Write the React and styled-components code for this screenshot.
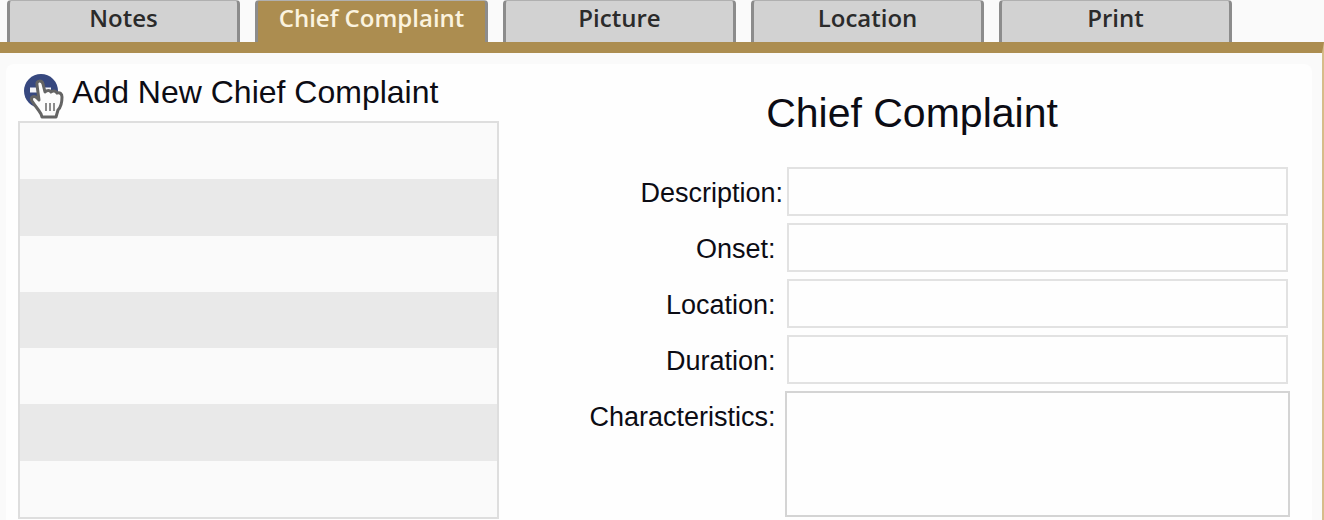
import React from 'react';
import { useState } from 'react';
import styled, { createGlobalStyle } from 'styled-components';

const tabs = ['Notes', 'Chief Complaint', 'Picture', 'Location', 'Print'];

// the labels keep the space that follows the colon
const fields = [
    { id: 'description', label: 'Description:' },
    { id: 'onset', label: 'Onset: ' },
    { id: 'location', label: 'Location: ' },
    { id: 'duration', label: 'Duration: ' },
];

const emptyRows = [1, 2, 3, 4, 5, 6, 7];

function AddIcon() {
    return (
        <IconSvg viewBox="0 0 40 46" aria-hidden="true">
            <circle cx="17" cy="17" r="17" fill="#37487f" />
            <path d="M6 16h21M16 7v18" stroke="#f4f4f8" strokeWidth="5" />
            <path
                d="M13 11c-1-5 5-5 6-1l2 8c2-2 5-2 6 0 2-2 5-1 6 1 3-1 5 1 5 4 0 6-1 10-4 13l-2 7H18l-1-3c-2-4-6-8-9-13-2-4 2-6 5-3l2 2z"
                fill="#fcfcfc"
                stroke="#646464"
                strokeWidth="3"
                strokeLinejoin="round"
            />
            <path d="M22 29v8M26 29v8M30 29v8" stroke="#8c8c8c" strokeWidth="2" />
        </IconSvg>
    );
}

function App() {
    const [active, setActive] = useState('Chief Complaint');

    return (
        <Page>
            <GlobalStyle />
            <TabBar>
                {tabs.map(tab => (
                    <Tab key={tab} type="button" $active={tab === active} onClick={() => setActive(tab)}>
                        {tab}
                    </Tab>
                ))}
            </TabBar>
            <Frame>
                <Panel>
                    <ListColumn>
                        <AddButton type="button">
                            <AddIcon />
                            Add New Chief Complaint
                        </AddButton>
                        <ComplaintList>
                            {emptyRows.map(row => <ComplaintRow key={row} />)}
                        </ComplaintList>
                    </ListColumn>
                    <FormColumn>
                        <Title>Chief Complaint</Title>
                        <Fields>
                            {fields.map(field => (
                                <React.Fragment key={field.id}>
                                    <Label htmlFor={field.id}>{field.label}</Label>
                                    <TextInput id={field.id} type="text" />
                                </React.Fragment>
                            ))}
                            <Label htmlFor="characteristics">{'Characteristics: '}</Label>
                            <TextArea id="characteristics" />
                        </Fields>
                    </FormColumn>
                </Panel>
            </Frame>
        </Page>
    );
}

export default App;

const GlobalStyle = createGlobalStyle`
    * {
        box-sizing: border-box;
    }

    body {
        margin: 0;
        background-color: #fafafa;
        color: #0c0c14;
        font-family: "Liberation Sans", Arial, sans-serif;
    }
`

const Page = styled.div`
    display: flex;
    flex-direction: column;
    min-height: 100vh;
`

const TabBar = styled.nav`
    display: flex;
    gap: 15px;
    padding: 0 7px;
`

const Tab = styled.button`
    flex: 0 1 233px;
    height: 42px;
    padding: 0 0 7px;
    border: 3px solid #8c8c8c;
    border-top: 1px solid #b0b0b0;
    border-bottom: 0;
    border-radius: 4px 4px 0 0;
    background-color: ${props => props.$active ? '#ac8d50' : '#d2d2d2'};
    color: ${props => props.$active ? '#fbf3df' : '#2b2b2b'};
    font-family: "Open Sans", sans-serif;
    font-size: 24px;
    font-weight: 600;
    line-height: 34px;
    white-space: nowrap;
    cursor: pointer;
`

const Frame = styled.main`
    flex: 1;
    display: flex;
    padding: 11px 10px 0 6px;
    border-top: 11px solid #ac8d50;
    border-right: 2px solid #d6bd8a;
`

const Panel = styled.div`
    flex: 1;
    display: flex;
    gap: 13px;
    padding-left: 12px;
    border-radius: 8px 8px 0 0;
    background-color: #fefefe;
`

const ListColumn = styled.section`
    flex: 0 1 481px;
    padding-top: 10px;
`

const AddButton = styled.button`
    display: flex;
    align-items: flex-start;
    gap: 8px;
    height: 47px;
    padding: 0 0 0 6px;
    border: 0;
    background: none;
    color: inherit;
    font-family: inherit;
    font-size: 32px;
    line-height: 36px;
    white-space: nowrap;
    cursor: pointer;
`

const IconSvg = styled.svg`
    flex: none;
    width: 40px;
    height: 46px;
    fill: none;
`

const ComplaintList = styled.ul`
    display: flex;
    flex-direction: column;
    height: 398px;
    margin: 0;
    padding: 0;
    border: 2px solid #dedede;
    list-style: none;
`

const ComplaintRow = styled.li`
    flex: 1;
    background-color: #fafafa;

    &:nth-child(even) {
        background-color: #e9e9e9;
    }
`

const FormColumn = styled.form`
    flex: 1;
    padding-top: 26px;
`

const Title = styled.h1`
    margin: 0 0 31px;
    font-size: 41px;
    font-weight: 400;
    line-height: 46px;
    text-align: center;
`

const Fields = styled.div`
    display: grid;
    grid-template-columns: 273px 1fr;
    row-gap: 7px;
    padding-right: 22px;
`

const Label = styled.label`
    height: 49px;
    padding-right: 2px;
    font-size: 27px;
    line-height: 52px;
    text-align: right;
    white-space: pre;
`

const TextInput = styled.input`
    height: 49px;
    min-width: 0;
    margin: 0 2px;
    padding: 0 8px;
    border: 2px solid #e2e2e2;
    background-color: #fefefe;
    font: inherit;
    font-size: 27px;
`

const TextArea = styled.textarea`
    height: 126px;
    min-width: 0;
    padding: 8px;
    border: 2px solid #d4d4d4;
    background-color: #fefefe;
    font: inherit;
    font-size: 27px;
    resize: none;
`
